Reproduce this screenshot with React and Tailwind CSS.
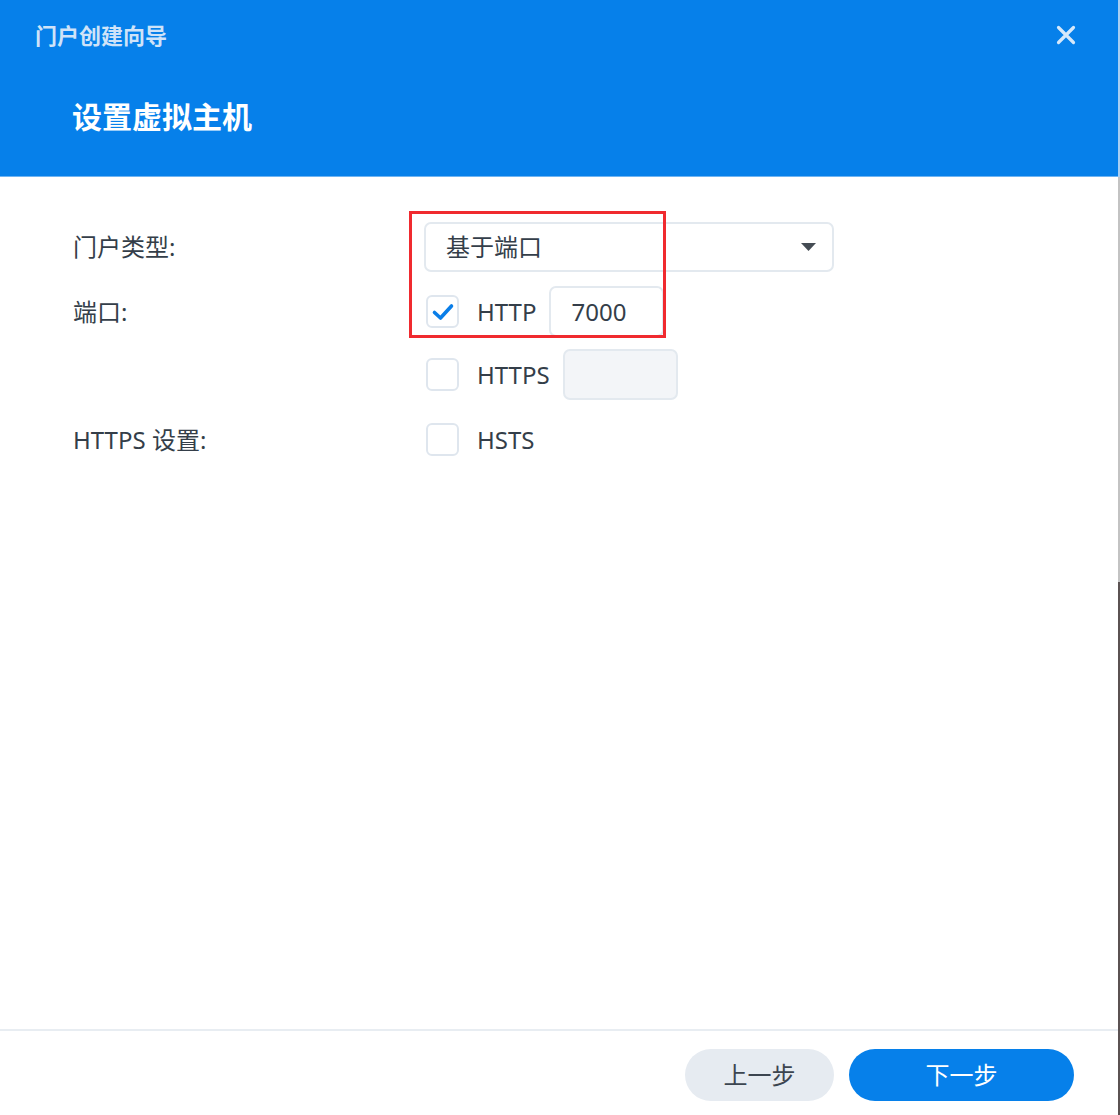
const font = { fontFamily: '"Noto Sans", "Noto Sans CJK SC", sans-serif' };

const Checkbox = ({ checked }) => (
  <div className="ml-[2px] w-[33px] h-[33px] shrink-0 rounded-[6px] border-2 border-[#dfe6ee] bg-white flex items-center justify-center">
    {checked && (
      <svg width="24" height="24" viewBox="0 0 24 24" fill="none">
        <path d="M3.5 12.5 L9.5 18 L20.5 6" stroke="#0a7ee8" strokeWidth="3.6" strokeLinecap="round" strokeLinejoin="round" />
      </svg>
    )}
  </div>
);

const App = () => {
  return (
    <div className="w-[1120px] h-[1115px] flex bg-white text-[#343e49] overflow-hidden" style={font}>
      <div className="flex-1 flex flex-col relative">
        {/* Header */}
        <div className="h-[177px] shrink-0 bg-[#0680ea] border-b border-[#6fb4f2] relative">
          <div className="pl-[35px] pt-[19px] text-[22px] leading-[32px] font-semibold text-[#cfe3f8]">门户创建向导</div>
          <button className="absolute right-[42px] top-[25px] w-[20px] h-[20px]">
            <svg width="20" height="20" viewBox="0 0 20 20">
              <path d="M2.5 2.5 L17.5 17.5 M17.5 2.5 L2.5 17.5" stroke="#d6e8fa" strokeWidth="3.2" strokeLinecap="round" />
            </svg>
          </button>
          <div className="pl-[72px] pt-[45px] text-[30px] leading-[42px] font-bold text-white">设置虚拟主机</div>
        </div>

        {/* Form */}
        <div className="flex-1 pl-[73px] pt-[45px] text-[24px]">
          <div className="flex items-center h-[50px]">
            <div className="w-[351px]">门户类型:</div>
            <div className="w-[410px] h-[50px] rounded-[7px] border-2 border-[#e3e9ef] flex items-center justify-between pl-[20px] pr-[16px]">
              <span>基于端口</span>
              <svg width="15" height="8" viewBox="0 0 15 8">
                <path d="M0 0 H15 L7.5 8 Z" fill="#454c54" />
              </svg>
            </div>
          </div>

          <div className="flex items-center h-[51px] mt-[14px]">
            <div className="w-[351px]">端口:</div>
            <Checkbox checked />
            <span className="ml-[18px]">HTTP</span>
            <div className="ml-[13px] w-[115px] h-[51px] rounded-[7px] border-2 border-[#e3e9ef] flex items-center pl-[20px]">7000</div>
          </div>

          <div className="flex items-center h-[51px] mt-[12px]">
            <div className="w-[351px]" />
            <Checkbox />
            <span className="ml-[18px]">HTTPS</span>
            <div className="ml-[13px] w-[115px] h-[51px] rounded-[7px] border-2 border-[#e3e9ef] bg-[#f3f5f8]" />
          </div>

          <div className="flex items-center h-[51px] mt-[14px]">
            <div className="w-[351px]">HTTPS 设置:</div>
            <Checkbox />
            <span className="ml-[18px]">HSTS</span>
          </div>
        </div>

        {/* Annotation box */}
        <div className="absolute left-[409px] top-[211px] w-[257px] h-[127px] border-[3px] border-[#f02a2f] pointer-events-none" />

        {/* Footer */}
        <div className="h-[86px] shrink-0 border-t-2 border-[#e8edf2] flex items-start justify-end gap-[15px] pt-[18px] pr-[44px]">
          <button className="w-[149px] h-[52px] rounded-full bg-[#e6ebf1] text-[24px] text-[#3c4550]">上一步</button>
          <button className="w-[225px] h-[52px] rounded-full bg-[#0680ea] text-[24px] text-white">下一步</button>
        </div>
      </div>

      {/* window edge */}
      <div className="w-[2px] flex flex-col">
        <div className="h-[177px] bg-[#a8cff3]" />
        <div className="h-[405px] bg-[#c3c3c3]" />
        <div className="flex-1 bg-[#5b5252]" />
      </div>
    </div>
  );
};

export default App;
